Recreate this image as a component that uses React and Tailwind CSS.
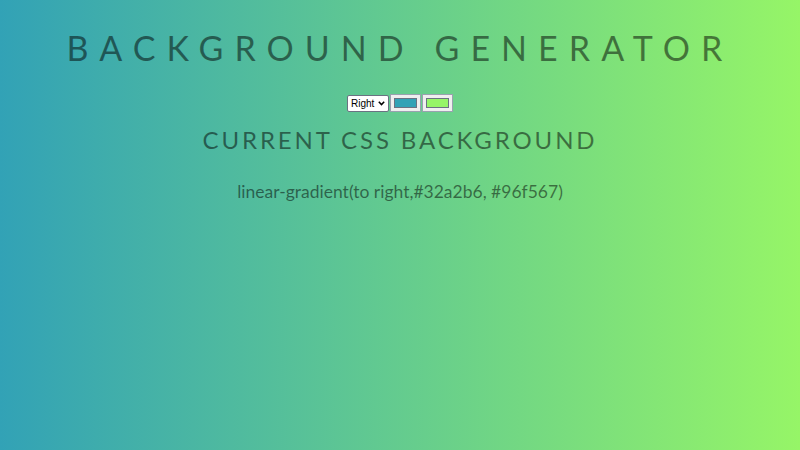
export default function App() {
  return (
    <div
      className="w-full h-[450px] flex flex-col items-center text-center bg-[linear-gradient(to_right,#32a2b6,#96f567)]"
      style={{ fontFamily: "Lato, 'Noto Sans', sans-serif" }}
    >
      <h1 className="mt-[26px] whitespace-nowrap text-[34px] leading-[44px] font-normal uppercase tracking-[0.325em] text-black/50">
        Background Generator
      </h1>

      <div className="mt-[24px] flex items-center gap-[1px] h-[18px]">
        <div className="relative h-[17px] w-[42px]">
          <select
            defaultValue="right"
            className="block appearance-none h-[17px] w-[42px] pl-[3px] pr-[12px] py-0 bg-white border border-gray-500 rounded-[2px] text-[10px] leading-[15px] text-black"
            style={{ fontFamily: "Arial, 'Liberation Sans', sans-serif" }}
          >
            <option value="right">Right</option>
            <option value="left">Left</option>
            <option value="top">Top</option>
            <option value="bottom">Bottom</option>
          </select>
          <svg
            className="pointer-events-none absolute right-[4px] top-[6px]"
            width="7"
            height="5"
            viewBox="0 0 7 5"
          >
            <path d="M0.8 0.8 L3.5 3.6 L6.2 0.8" fill="none" stroke="#000" strokeWidth="1.5" />
          </svg>
        </div>
        <div className="h-[18px] w-[31px] bg-[#efefef] border border-gray-400 p-[3px]">
          <div className="w-full h-full bg-[#32a2b6] border border-gray-500"></div>
        </div>
        <div className="h-[18px] w-[31px] bg-[#efefef] border border-gray-400 p-[3px]">
          <div className="w-full h-full bg-[#96f567] border border-gray-500"></div>
        </div>
      </div>

      <h3 className="mt-[12px] whitespace-nowrap text-[24px] leading-[32px] font-normal uppercase tracking-[0.12em] text-black/50">
        Current CSS Background
      </h3>

      <p className="mt-[24px] text-[17.5px] leading-[24px] text-black/50">
        linear-gradient(to right,#32a2b6, #96f567)
      </p>
    </div>
  );
}
